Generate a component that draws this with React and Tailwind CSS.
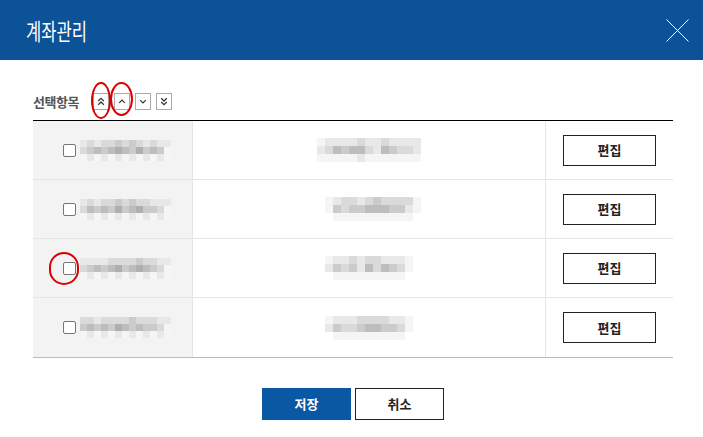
import React from "react";

const font = { fontFamily: '"Noto Sans CJK KR", "Noto Sans", sans-serif' };

// 흐림 처리된 텍스트 (모자이크 블록)
const shades = {
  0: "bg-transparent",
  1: "bg-[#f5f5f5]",
  2: "bg-[#e8e8e8]",
  3: "bg-[#dadada]",
  4: "bg-[#cbcbcb]",
  5: "bg-[#bdbdbd]",
  6: "bg-[#afafaf]",
};

function Mosaic({ rows, size }) {
  return (
    <div className="flex flex-col">
      {rows.map((row, i) => (
        <div key={i} className="flex">
          {row.split("").map((c, j) => (
            <div key={j} className={shades[c]} style={{ width: size, height: size }} />
          ))}
        </div>
      ))}
    </div>
  );
}

const rows = [
  {
    name: ["2323343432322", "3454565464541", "1212121212121"],
    num: ["1222232232222", "2354553254332", "1111121111111"],
  },
  {
    name: ["2323343433222", "3545464564431", "1212121212121"],
    num: ["0123323433331", "0143445554421", "0011111111110"],
  },
  {
    name: ["2222333343322", "3454564565431", "1212121212121"],
    num: ["0122323322210", "0243425354310", "0011111111100"],
  },
  {
    name: ["3323333433322", "4545465454431", "1212121212121"],
    num: ["0122233332210", "0243345544310", "0011111111100"],
  },
];

function Chevron({ double, down }) {
  return (
    <div className="w-[16px] h-[17px] border border-[#aaa] bg-white flex items-center justify-center">
      <svg width="15" height="15" viewBox="0 0 15 15" fill="none" stroke="#333" strokeWidth="1.3">
        {double ? (
          <>
            <path d={down ? "M4.5 4l3 3 3-3" : "M4.5 7l3-3 3 3"} />
            <path d={down ? "M4.5 8l3 3 3-3" : "M4.5 11l3-3 3 3"} />
          </>
        ) : (
          <path d={down ? "M4.5 6l3 3 3-3" : "M4.5 9l3-3 3 3"} />
        )}
      </svg>
    </div>
  );
}

export default function App() {
  return (
    <div className="w-[703px] h-[437px] bg-white overflow-hidden" style={font}>
      {/* 헤더 */}
      <div className="h-[60px] bg-[#0b5297] flex items-center justify-between pl-[26px] pr-[14px]">
        <h1 className="text-white text-[23px] leading-none origin-left scale-x-[0.72]">계좌관리</h1>
        <svg width="23" height="23" viewBox="0 0 23 23" stroke="#fff" strokeWidth="1">
          <path d="M0.5 0.5L22.5 22.5M22.5 0.5L0.5 22.5" />
        </svg>
      </div>

      <div className="pl-[33px] pr-[30px]">
        {/* 선택항목 */}
        <div className="mt-[33px] h-[17px] flex items-center">
          <span className="text-[13px] font-bold text-[#555] mr-[14px] tracking-[-0.5px]">선택항목</span>
          <div className="flex gap-[5px]">
            <div className="relative">
              <Chevron double />
              <div className="absolute left-[-2px] top-[-11px] w-[20px] h-[37px] rounded-[50%] border-2 border-[#d00] pointer-events-none" />
            </div>
            <div className="relative">
              <Chevron />
              <div className="absolute left-[-4px] top-[-11px] w-[23px] h-[34px] rounded-[50%] border-2 border-[#d00] pointer-events-none" />
            </div>
            <Chevron down />
            <Chevron double down />
          </div>
        </div>

        {/* 목록 */}
        <div className="mt-[10px] border-t border-black border-b border-b-[#bbb]">
          {rows.map((r, i) => (
            <div
              key={i}
              className={
                "grid grid-cols-[160px_352px_1fr] h-[59px] " +
                (i < rows.length - 1 ? "border-b border-[#e5e5e5]" : "")
              }
            >
              <div className="bg-[#f3f3f3] border-r border-[#e5e5e5] flex items-center pl-[30px] gap-[4px]">
                <div className="relative">
                  <div className="w-[13px] h-[13px] rounded-[2px] border border-[#767676] bg-white" />
                  {i === 2 && (
                    <div className="absolute left-[-14px] top-[-10px] w-[30px] h-[33px] rounded-full border-2 border-[#d00]" />
                  )}
                </div>
                <Mosaic rows={r.name} size={7} />
              </div>
              <div className="flex items-center justify-center">
                <Mosaic rows={r.num} size={8} />
              </div>
              <div className="border-l border-[#e5e5e5] flex items-center justify-center">
                <button className="w-[93px] h-[31px] border border-[#222] bg-white text-[13px] font-bold text-[#222]">
                  편집
                </button>
              </div>
            </div>
          ))}
        </div>

        {/* 하단 버튼 */}
        <div className="mt-[30px] flex justify-center gap-[4px]">
          <button className="w-[89px] h-[32px] bg-[#0a57a3] text-white text-[13px] font-bold">저장</button>
          <button className="w-[89px] h-[32px] border border-[#222] bg-white text-[13px] font-bold text-[#222]">
            취소
          </button>
        </div>
      </div>
    </div>
  );
}
